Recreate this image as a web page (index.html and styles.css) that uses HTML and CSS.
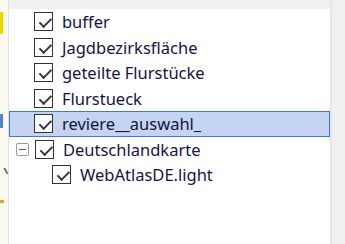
FILE: index.html
```html
<!DOCTYPE html>
<html lang="de">
<head>
  <meta charset="UTF-8">
  <title>Layer</title>
  <link rel="stylesheet" href="styles.css">
</head>
<body>

<div class="frame">
  <div class="side">
    <span class="mark mark-arrow"></span>
    <span class="mark mark-blue"></span>
    <span class="mark mark-cross"></span>
    <span class="mark mark-orange"></span>
  </div>

  <div class="main">
    <div class="topbar"></div>
    <div class="tree">
      <div class="row"><span class="chk"></span><span class="name">buffer</span></div>
      <div class="row"><span class="chk"></span><span class="name">Jagdbezirksfläche</span></div>
      <div class="row"><span class="chk"></span><span class="name">geteilte Flurstücke</span></div>
      <div class="row"><span class="chk"></span><span class="name">Flurstueck</span></div>
      <div class="row selected"><span class="chk"></span><span class="name">reviere__auswahl_</span></div>
      <div class="row"><span class="toggle"></span><span class="chk"></span><span class="name">Deutschlandkarte</span></div>
      <div class="row child"><span class="chk"></span><span class="name">WebAtlasDE.light</span></div>
    </div>
  </div>

  <div class="scroll"></div>
</div>

</body>
</html>
```

FILE: styles.css
```css
html, body {
  margin: 0;
  padding: 0;
}
body {
  font-family: 'Noto Sans', 'Liberation Sans', sans-serif;
  background: #f0f0f0;
  width: 345px;
  height: 244px;
  overflow: hidden;
}
.frame {
  display: flex;
  height: 244px;
}
.side {
  width: 8px;
  background: #fbfbf2;
  border-right: 1px solid #e2e2e2;
  display: flex;
  flex-direction: column;
  align-items: flex-start;
  overflow: hidden;
}
.mark {
  display: block;
}
.mark-arrow {
  width: 4px;
  height: 22px;
  margin-top: 12px;
  border-left: 3px solid #f2d600;
}
.mark-blue {
  width: 4px;
  height: 14px;
  margin-top: 80px;
  border-left: 3px solid #4f86cc;
}
.mark-cross {
  width: 5px;
  height: 6px;
  margin-top: 40px;
  border-right: 2px solid #666;
  transform: skewX(30deg);
}
.mark-orange {
  width: 4px;
  height: 3px;
  background: #f0a020;
  margin-top: 26px;
}
.main {
  width: 323px;
  display: flex;
  flex-direction: column;
}
.topbar {
  height: 9px;
  background: #f0f0f0;
}
.tree {
  flex: 1;
  background: #fff;
  padding-top: 0;
}
.row {
  height: 25.5px;
  display: flex;
  align-items: center;
  padding-left: 25px;
  box-sizing: border-box;
  font-size: 16.5px;
  color: #141444;
}
.row.selected {
  background: #c3d5f0;
  border: 1px solid #3f77d1;
  padding-left: 24px;
}
.row.child {
  padding-left: 43px;
}
.chk {
  width: 17px;
  height: 17px;
  border: 1px solid #333;
  margin-right: 9px;
  position: relative;
  background: #fff;
}
.chk::after {
  content: '';
  position: absolute;
  left: 3px;
  top: 2px;
  width: 10px;
  height: 5px;
  border-left: 2px solid #333;
  border-bottom: 2px solid #333;
  transform: rotate(-45deg) translate(-1px, 3px);
}
.toggle {
  width: 11px;
  height: 11px;
  border: 1px solid #999;
  border-radius: 2px;
  margin-left: -18px;
  margin-right: 6px;
  position: relative;
}
.toggle::after {
  content: '';
  position: absolute;
  left: 2px;
  top: 5px;
  width: 7px;
  height: 1px;
  background: #3060b0;
}
.scroll {
  width: 13px;
  background: #f0f0f0;
  border-left: 2px solid #e6e6e6;
}
```
